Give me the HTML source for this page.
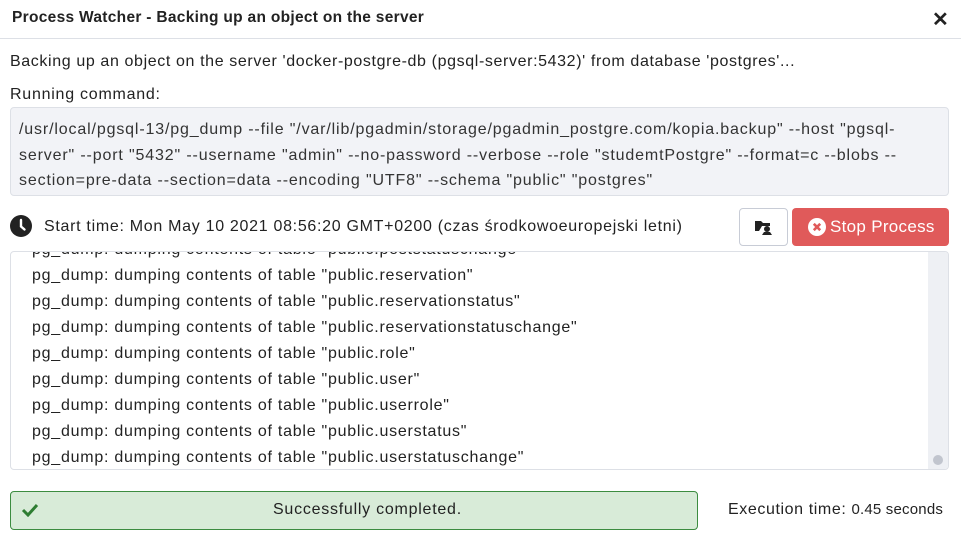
<!DOCTYPE html>
<html><head><meta charset="utf-8"><style>
*{box-sizing:border-box;margin:0;padding:0}
body{width:961px;height:541px;background:#fff;font-family:"Liberation Sans",sans-serif;color:#222;position:relative;overflow:hidden}
.a{position:absolute;white-space:nowrap}
.t{font-size:16px;letter-spacing:0.75px}
</style></head><body>
<div class="a" style="left:0;top:0;width:961px;height:39px;border-bottom:1px solid #dde0e6"></div>
<div class="a" style="left:12px;top:9px;font-size:15.5px;font-weight:bold;color:#222;letter-spacing:0.3px">Process Watcher - Backing up an object on the server</div>
<div class="a" style="left:932px;top:7px;font-size:20px;font-weight:bold">✕</div>
<div class="a t" style="left:10px;top:53px;letter-spacing:0.62px">Backing up an object on the server 'docker-postgre-db (pgsql-server:5432)' from database 'postgres'...</div>
<div class="a t" style="left:10px;top:86px">Running command:</div>
<div class="a" style="left:10px;top:107px;width:939px;height:89px;background:#f2f3f7;border:1px solid #dde0e6;border-radius:4px"></div>
<div class="a t" style="left:19px;top:117px;line-height:25.5px;color:#333;letter-spacing:0.85px">/usr/local/pgsql-13/pg_dump --file "/var/lib/pgadmin/storage/pgadmin_postgre.com/kopia.backup" --host "pgsql-<br>server" --port "5432" --username "admin" --no-password --verbose --role "studemtPostgre" --format=c --blobs --<br>section=pre-data --section=data --encoding "UTF8" --schema "public" "postgres"</div>
<svg class="a" style="left:10px;top:215px" width="22" height="22" viewBox="0 0 22 22"><circle cx="11" cy="11" r="11" fill="#222"/><path d="M11 5v6.5l3.5 3" stroke="#fff" stroke-width="2.4" fill="none" stroke-linecap="round"/></svg>
<div class="a t" style="left:44px;top:218px;letter-spacing:0.7px">Start time: Mon May 10 2021 08:56:20 GMT+0200 (czas środkowoeuropejski letni)</div>
<div class="a" style="left:739px;top:208px;width:49px;height:38px;border:1px solid #c8ccd6;border-radius:4px;background:#fff"></div>
<svg class="a" style="left:754px;top:219px" width="20" height="17" viewBox="0 0 20 17"><path d="M1 2h6l2 2h7v3H8l-3 5H1z" fill="#222"/><circle cx="13" cy="10" r="3" fill="#222"/><path d="M8 16l2-3h6l2 3z" fill="#222"/></svg>
<div class="a" style="left:792px;top:208px;width:157px;height:38px;background:#e05a5a;border-radius:4px"></div>
<svg class="a" style="left:808px;top:218px" width="18" height="18" viewBox="0 0 18 18"><circle cx="9" cy="9" r="9" fill="#fff"/><path d="M5.8 5.8l6.4 6.4M12.2 5.8l-6.4 6.4" stroke="#e05a5a" stroke-width="2.6"/></svg>
<div class="a" style="left:830px;top:217px;font-size:17px;color:#fff;letter-spacing:0.3px">Stop Process</div>
<div class="a" style="left:10px;top:251px;width:939px;height:219px;border:1px solid #dde0e6;border-radius:4px;overflow:hidden">
<div class="a" style="right:0;top:0;width:20px;height:219px;background:#eef0f4"></div>
<div class="a" style="right:5px;top:203px;width:10px;height:10px;border-radius:5px;background:#c1c5ce"></div>
<div class="a t" style="left:21px;top:-15px;line-height:26px;color:#222">pg_dump: dumping contents of table "public.poststatuschange"<br>pg_dump: dumping contents of table "public.reservation"<br>pg_dump: dumping contents of table "public.reservationstatus"<br>pg_dump: dumping contents of table "public.reservationstatuschange"<br>pg_dump: dumping contents of table "public.role"<br>pg_dump: dumping contents of table "public.user"<br>pg_dump: dumping contents of table "public.userrole"<br>pg_dump: dumping contents of table "public.userstatus"<br>pg_dump: dumping contents of table "public.userstatuschange"</div>
</div>
<div class="a" style="left:10px;top:491px;width:688px;height:39px;background:#d8ebd8;border:1px solid #3c8c40;border-radius:4px"></div>
<svg class="a" style="left:21px;top:503px" width="18" height="14" viewBox="0 0 18 14"><path d="M2 7l5 5L16 2" stroke="#2e7d32" stroke-width="3" fill="none"/></svg>
<div class="a t" style="left:273px;top:501px">Successfully completed.</div>
<div class="a t" style="left:728px;top:501px;letter-spacing:0.6px">Execution time: <span style="font-size:15px;letter-spacing:0.2px">0.45 seconds</span></div>
</body></html>
